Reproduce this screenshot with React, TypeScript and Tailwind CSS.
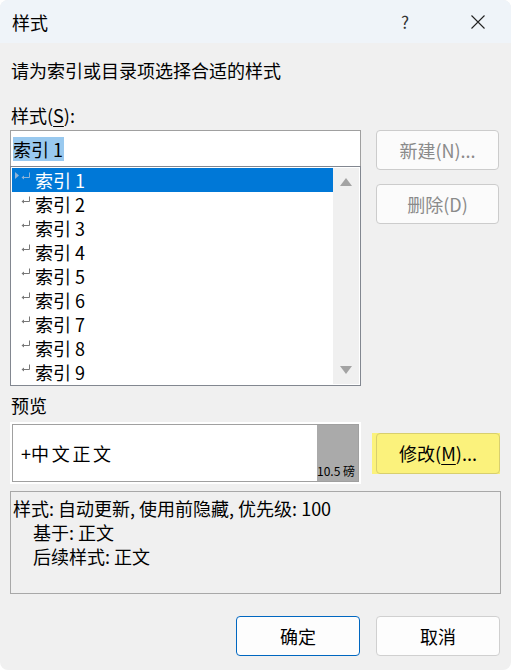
import React from 'react';

const FONT = { fontFamily: '"Noto Sans CJK SC", "Noto Sans", sans-serif' };

// little return-mark that Word draws in front of each style
function ReturnMark({ color }: { color: string }) {
  return (
    <svg width="10" height="8" viewBox="0 0 10 8" className="shrink-0">
      <path d="M8.5 0.5 V5.5 H2" stroke={color} strokeWidth="1" fill="none" />
      <path d="M0.5 5.5 L3 3.5 L3 7.5 Z" fill={color} />
    </svg>
  );
}

export default function App() {
  const items = ['索引 1', '索引 2', '索引 3', '索引 4', '索引 5', '索引 6', '索引 7', '索引 8', '索引 9'];

  return (
    <div className="w-[511px] h-[670px] bg-[#f0f0f0] text-[18px] text-black rounded-t-[8px] rounded-b-[8px] overflow-hidden" style={FONT}>
      {/* TITLE BAR */}
      <div className="h-[43px] bg-[#eff4f9] flex items-center pl-[12px]">
        <span className="leading-[24px]">样式</span>
        <span className="ml-auto mr-[30px] w-[20px] text-center text-[17px] text-[#333]">?</span>
        <div className="w-[66px] flex justify-center">
          <svg width="14" height="14" viewBox="0 0 14 14">
            <path d="M0.5 0.5 L13.5 13.5 M13.5 0.5 L0.5 13.5" stroke="#222" strokeWidth="1.1" />
          </svg>
        </div>
      </div>

      <div className="px-[10px]">
        <div className="mt-[15px] h-[24px] leading-[24px] pl-[1px]">请为索引或目录项选择合适的样式</div>
        <div className="mt-[21px] h-[24px] leading-[24px] pl-[1px]">
          样式(<span className="underline underline-offset-[3px]">S</span>):
        </div>

        {/* STYLE LIST + SIDE BUTTONS */}
        <div className="mt-[3px] flex gap-[15px]">
          <div className="w-[351px] flex flex-col">
            <div className="h-[36px] bg-white border border-b-0 border-[#a0a0a0] pl-[2px] flex items-center">
              <span className="bg-[#99c9ef] leading-[24px] pr-[1px]">索引 1</span>
            </div>
            <div className="h-[220px] bg-white border border-[#828790] p-[1px] flex">
              <div className="w-[321px] flex flex-col">
                {items.map((it, i) => (
                  <div
                    key={it}
                    className={
                      i === 0
                        ? 'h-[24px] flex items-center bg-[#0078d7] text-white relative'
                        : 'h-[24px] flex items-center'
                    }
                  >
                    {i === 0 && (
                      <svg width="4" height="7" viewBox="0 0 4 7" className="absolute left-[3px] top-[4px]">
                        <path d="M0 0 L4 3.5 L0 7 Z" fill="#8fb3d6" />
                      </svg>
                    )}
                    <div className="pl-[9px] pr-[4px] -mt-[8px]">
                      <ReturnMark color={i === 0 ? '#8fb3d6' : '#777'} />
                    </div>
                    <span className="leading-[24px]">{it}</span>
                  </div>
                ))}
              </div>
              <div className="w-[26px] bg-[#f0f0f0] flex flex-col items-center justify-between py-[10px]">
                <svg width="12" height="8" viewBox="0 0 12 8">
                  <path d="M6 0 L12 8 L0 8 Z" fill="#a3a3a3" />
                </svg>
                <svg width="12" height="8" viewBox="0 0 12 8">
                  <path d="M0 0 L12 0 L6 8 Z" fill="#a3a3a3" />
                </svg>
              </div>
            </div>
          </div>

          <div className="w-[123px] flex flex-col gap-[14px]">
            <button className="h-[40px] rounded-[4px] border border-[#cccccc] bg-[#fbfbfb] text-[#8a8a8a] text-[18px]">
              新建(N)...
            </button>
            <button className="h-[40px] rounded-[4px] border border-[#cccccc] bg-[#fbfbfb] text-[#8a8a8a] text-[18px]">
              删除(D)
            </button>
          </div>
        </div>

        {/* PREVIEW */}
        <div className="mt-[7px] h-[24px] leading-[24px] pl-[1px]">预览</div>
        <div className="mt-[5px] flex items-center">
          <div className="w-[351px] h-[62px] bg-white p-[2px]">
            <div className="h-full border border-[#a0a0a0] flex">
              <div className="flex-1 flex items-center pl-[8px] leading-[24px]">
                +<span className="tracking-[2.7px]">中文正文</span>
              </div>
              <div className="w-[41px] bg-[#aaaaaa] flex items-end justify-end pr-[3px] pb-[4px] text-[12px] leading-[12px] whitespace-nowrap">
                10.5 磅
              </div>
            </div>
          </div>
          <div className="ml-[11px] h-[41px] w-[128px] bg-[#fbf27c] pl-[4px] flex">
            <button className="flex-1 rounded-[4px] border border-[#d8cf6e] bg-[#fbf27c] text-[18px]">
              修改(<span className="underline underline-offset-[3px]">M</span>)...
            </button>
          </div>
        </div>

        {/* DESCRIPTION */}
        <div className="mt-[7px] w-[491px] h-[103px] border border-[#a8a8a8] bg-[#f0f0f0] pl-[2px] pt-[4px] leading-[24px]">
          <div>样式: 自动更新, 使用前隐藏, 优先级: 100</div>
          <div className="pl-[20px]">基于: 正文</div>
          <div className="pl-[20px]">后续样式: 正文</div>
        </div>

        {/* FOOTER BUTTONS */}
        <div className="mt-[22px] flex justify-end gap-[16px] pr-[1px]">
          <button className="w-[124px] h-[40px] rounded-[4px] border border-[#0067c0] bg-[#fdfdfd] text-[18px]">确定</button>
          <button className="w-[124px] h-[40px] rounded-[4px] border border-[#d0d0d0] bg-[#fdfdfd] text-[18px]">取消</button>
        </div>
      </div>
    </div>
  );
}
